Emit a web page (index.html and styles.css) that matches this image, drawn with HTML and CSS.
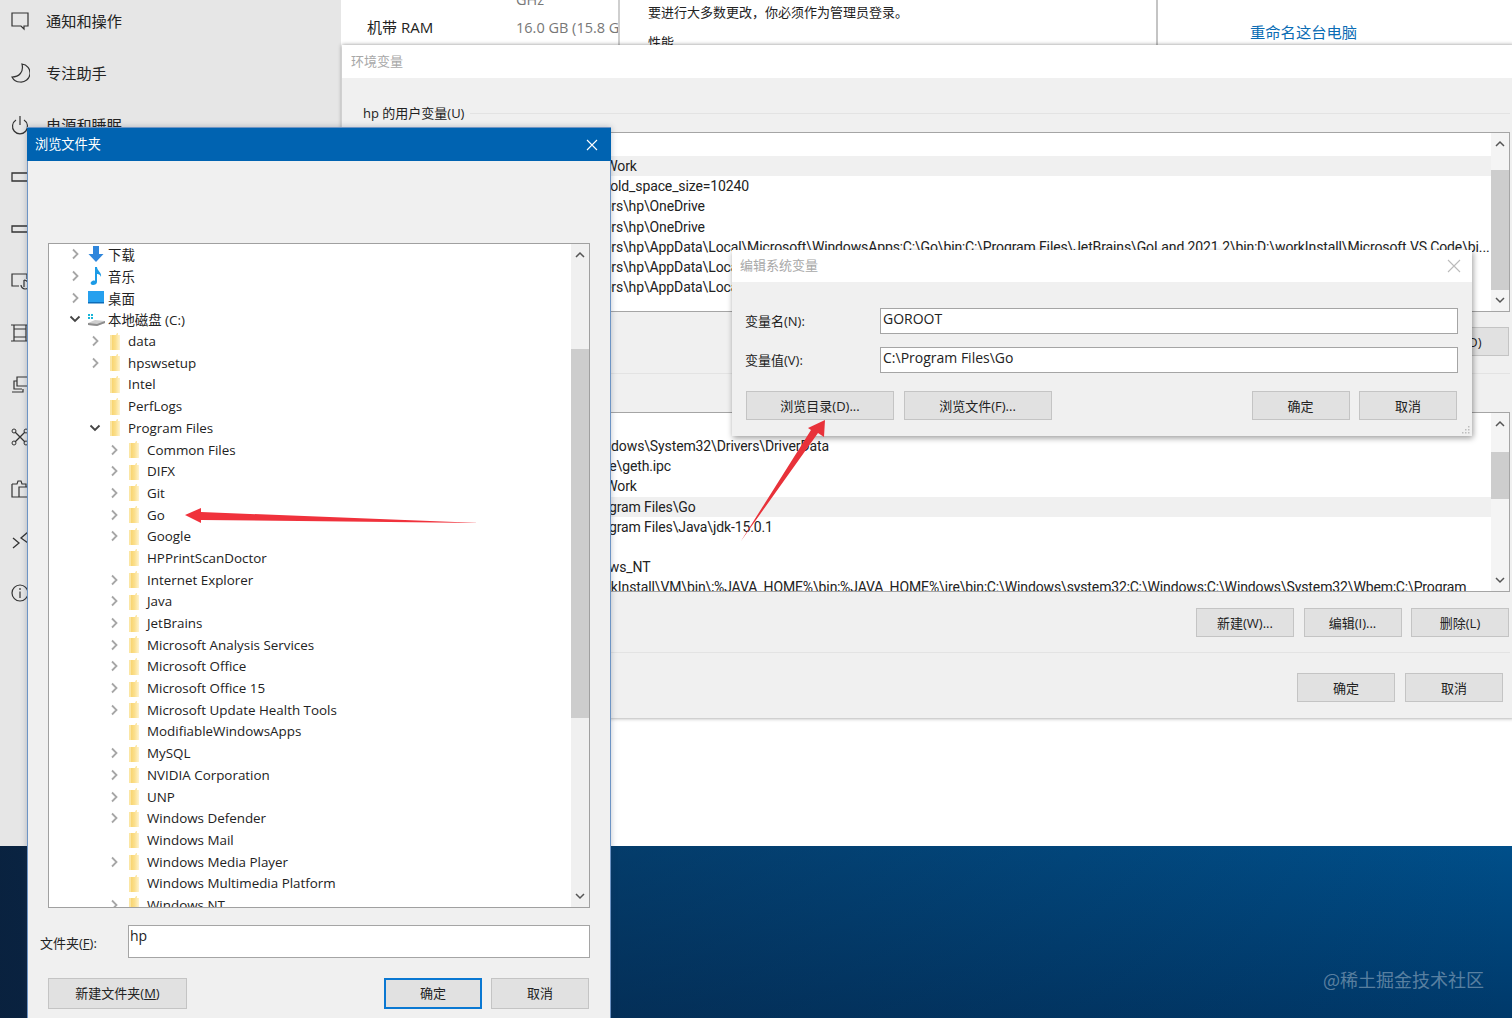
FILE: index.html
```html
<!DOCTYPE html>
<html lang="zh-CN">
<head>
<meta charset="UTF-8">
<title>浏览文件夹</title>
<link rel="stylesheet" href="styles.css">
</head>
<body>
<svg class="defs" width="0" height="0">
	<defs>
		<linearGradient id="folderFade" x1="0" x2="1" y1="0" y2="0">
			<stop offset="0" stop-color="#f7cf62"/>
			<stop offset="0.55" stop-color="#fbdf8c"/>
			<stop offset="1" stop-color="#fef3cf"/>
		</linearGradient>
	</defs>
	<symbol id="folder" viewBox="0 0 10 17">
		<path d="M0 2h6l1-2h1v2h2v15H0z" fill="url(#folderFade)"/>
		<path d="M0 2h2v15H0z" fill="#fbe6a4"/>
	</symbol>
	<symbol id="right" viewBox="0 0 12 12"><path d="M4 1.500L8.500 6 4 10.500" fill="none" stroke="#a6a6a6" stroke-width="1.800"/></symbol>
	<symbol id="down" viewBox="0 0 12 12"><path d="M1.500 3.500L6 8l4.500-4.500" fill="none" stroke="#444" stroke-width="1.800"/></symbol>
	<symbol id="sup" viewBox="0 0 12 8"><path d="M2 6l4-4 4 4" fill="none" stroke="#555" stroke-width="1.500"/></symbol>
	<symbol id="sdown" viewBox="0 0 12 8"><path d="M2 2l4 4 4-4" fill="none" stroke="#555" stroke-width="1.500"/></symbol>
</svg>

<!-- settings window behind everything -->
<div class="settings win">
	<nav class="side">
		<div class="nav-item">
			<svg class="nav-icon" viewBox="0 0 20 20"><path d="M2 2h16v13h-4v3l-3-3H2z" fill="none" stroke="#333" stroke-width="1.200"/></svg>
			<span>通知和操作</span>
		</div>
		<div class="nav-item">
			<svg class="nav-icon" viewBox="0 0 20 20"><path d="M12 1c2 8-3 13-10 13 2 4 6 5 8 5a9 9 0 0 0 2-18z" fill="none" stroke="#333" stroke-width="1.200"/></svg>
			<span>专注助手</span>
		</div>
		<div class="nav-item">
			<svg class="nav-icon" viewBox="0 0 20 20"><path d="M6 5a7.500 7.500 0 1 0 8 0M10 1v9" fill="none" stroke="#333" stroke-width="1.200"/></svg>
			<span>电源和睡眠</span>
		</div>
		<div class="nav-item">
			<svg class="nav-icon" viewBox="0 0 20 20"><path d="M2 6h16v8H2z" fill="none" stroke="#333" stroke-width="1.300"/></svg>
		</div>
		<div class="nav-item">
			<svg class="nav-icon" viewBox="0 0 20 20"><path d="M2 7h16v6H2z" fill="none" stroke="#333" stroke-width="1.300"/></svg>
		</div>
		<div class="nav-item">
			<svg class="nav-icon" viewBox="0 0 20 20"><path d="M9 15H2V3h15v5M14 9v7M14 9c3 0 5 3 5 6s-2 3-4 3-4-2-4-4" fill="none" stroke="#333" stroke-width="1.200"/></svg>
		</div>
		<div class="nav-item">
			<svg class="nav-icon" viewBox="0 0 20 20"><path d="M1 2h18M1 18h18M4 2v16M16 2v16M4 6h12M4 14h12" fill="none" stroke="#333" stroke-width="1.200"/></svg>
		</div>
		<div class="nav-item">
			<svg class="nav-icon" viewBox="0 0 20 20"><path d="M7 2h12v9H7zM7 6H4v8h8M2 17h11v-3" fill="none" stroke="#333" stroke-width="1.200"/></svg>
		</div>
		<div class="nav-item">
			<svg class="nav-icon" viewBox="0 0 20 20"><path d="M5 5l10 10M15 5L5 15" stroke="#333" stroke-width="1.300"/><circle cx="4" cy="4" r="2" fill="none" stroke="#333"/><circle cx="16" cy="4" r="2" fill="none" stroke="#333"/><circle cx="4" cy="16" r="2" fill="none" stroke="#333"/><circle cx="16" cy="16" r="2" fill="none" stroke="#333"/></svg>
		</div>
		<div class="nav-item">
			<svg class="nav-icon" viewBox="0 0 20 20"><path d="M2 5h5l1-3h3l1 3h4v3M2 5v13h7M9 8h10v10H9z" fill="none" stroke="#333" stroke-width="1.200"/></svg>
		</div>
		<div class="nav-item">
			<svg class="nav-icon" viewBox="0 0 20 20"><path d="M3 7l6 5-6 5M18 1l-7 6 7 5" fill="none" stroke="#333" stroke-width="1.300"/></svg>
		</div>
		<div class="nav-item">
			<svg class="nav-icon" viewBox="0 0 20 20"><circle cx="10" cy="10" r="8" fill="none" stroke="#333" stroke-width="1.200"/><path d="M10 8.500V15M10 5v2" stroke="#333" stroke-width="1.200"/></svg>
		</div>
	</nav>
	<div class="about">
		<div class="about-specs">
			<div class="spec spec-cut"><span class="spec-name"></span><span class="spec-val">GHz</span></div>
			<div class="spec"><span class="spec-name">机带 RAM</span><span class="spec-val">16.0 GB (15.8 GB 可用)</span></div>
		</div>
		<div class="admin-card">
			<p class="admin-msg">要进行大多数更改，你必须作为管理员登录。</p>
			<p class="admin-sub">性能</p>
		</div>
		<div class="about-links"><a class="rename">重命名这台电脑</a></div>
	</div>
</div>

<div class="desktop"><span class="watermark">@稀土掘金技术社区</span></div>

<!-- environment variables -->
<div class="env win">
	<div class="titlebar light"><span>环境变量</span></div>
	<div class="env-body">
		<div class="group-label"><span>hp 的用户变量(U)</span></div>
		<div class="list user-list">
			<div class="rows">
				<div class="row head"></div>
				<div class="row hl">D:\GoWork</div>
				<div class="row">--max_old_space_size=10240</div>
				<div class="row">C:\Users\hp\OneDrive</div>
				<div class="row">C:\Users\hp\OneDrive</div>
				<div class="row">C:\Users\hp\AppData\Local\Microsoft\WindowsApps;C:\Go\bin;C:\Program Files\JetBrains\GoLand 2021.2\bin;D:\workInstall\Microsoft VS Code\bi...</div>
				<div class="row">C:\Users\hp\AppData\Local\Temp</div>
				<div class="row">C:\Users\hp\AppData\Local\Temp</div>
			</div>
			<div class="scroll">
				<svg class="arrow"><use href="#sup"/></svg>
				<div class="track"><div class="thumb thumb-user"></div></div>
				<svg class="arrow"><use href="#sdown"/></svg>
			</div>
		</div>
		<div class="btn-row first-row"><button class="btn">删除(D)</button></div>
		<div class="rule"></div>
		<div class="list sys-list">
			<div class="rows">
				<div class="row head"></div>
				<div class="row">C:\Windows\System32\Drivers\DriverData</div>
				<div class="row">\\.\pipe\geth.ipc</div>
				<div class="row">D:\GoWork</div>
				<div class="row hl">C:\Program Files\Go</div>
				<div class="row">C:\Program Files\Java\jdk-15.0.1</div>
				<div class="row"></div>
				<div class="row">Windows_NT</div>
				<div class="row">D:\workInstall\VM\bin\;%JAVA_HOME%\bin;%JAVA_HOME%\jre\bin;C:\Windows\system32;C:\Windows;C:\Windows\System32\Wbem;C:\Program</div>
			</div>
			<div class="scroll">
				<svg class="arrow"><use href="#sup"/></svg>
				<div class="track"><div class="thumb thumb-sys"></div></div>
				<svg class="arrow"><use href="#sdown"/></svg>
			</div>
		</div>
		<div class="btn-row sys-btns">
			<button class="btn">新建(W)...</button>
			<button class="btn">编辑(I)...</button>
			<button class="btn">删除(L)</button>
		</div>
		<div class="rule rule-low"></div>
		<div class="btn-row env-ok">
			<button class="btn">确定</button>
			<button class="btn">取消</button>
		</div>
	</div>
</div>

<!-- edit system variable -->
<div class="edit win">
	<div class="titlebar light edit-title">
		<span>编辑系统变量</span>
		<svg class="close" viewBox="0 0 14 14"><path d="M1 1l12 12M13 1L1 13" stroke="#bbb" stroke-width="1.100"/></svg>
	</div>
	<div class="edit-body">
		<div class="field"><label>变量名(N):</label><div class="input">GOROOT</div></div>
		<div class="field"><label>变量值(V):</label><div class="input">C:\Program Files\Go</div></div>
		<div class="edit-btns">
			<button class="btn btn-wide">浏览目录(D)...</button>
			<button class="btn btn-wide">浏览文件(F)...</button>
			<span class="spacer"></span>
			<button class="btn">确定</button>
			<button class="btn">取消</button>
		</div>
	</div>
	<svg class="grip" viewBox="0 0 9 9"><path d="M7 1h1.500v1.500H7zM4 4h1.500v1.500H4zM7 4h1.500v1.500H7zM1 7h1.500v1.500H1zM4 7h1.500v1.500H4zM7 7h1.500v1.500H7z" fill="#bdbdbd"/></svg>
</div>

<!-- browse for folder -->
<div class="browse win">
	<div class="titlebar blue">
		<span>浏览文件夹</span>
		<svg class="close" viewBox="0 0 14 14"><path d="M2 2l10 10M12 2L2 12" stroke="#fff" stroke-width="1.100"/></svg>
	</div>
	<div class="browse-body">
		<div class="tree">
			<div class="tree-rows">
				<div class="node"><svg class="tw"><use href="#right"/></svg>
					<svg class="ico" viewBox="0 0 18 18"><path d="M6 1h6v8h4.500L9 17 1.500 9H6z" fill="#2f86dc"/></svg><span>下载</span></div>
				<div class="node"><svg class="tw"><use href="#right"/></svg>
					<svg class="ico" viewBox="0 0 18 18"><path d="M8 0h2c0 4 5 5 4 10-1-3-3-3-4-3v8c0 2-2 3-4 3s-3-2-2-3 3-2 4-1z" fill="#1c9be6"/></svg><span>音乐</span></div>
				<div class="node"><svg class="tw"><use href="#right"/></svg>
					<svg class="ico" viewBox="0 0 18 18"><path d="M1 2h16v12H1z" fill="#26a0ee"/><path d="M1 13h16v1.500H1z" fill="#0c6cb8"/></svg><span>桌面</span></div>
				<div class="node"><svg class="tw"><use href="#down"/></svg>
					<svg class="ico" viewBox="0 0 18 18"><path d="M1 4h2v2H1zM4 4h2v2H4zM1 7h2v2H1zM4 7h2v2H4z" fill="#17b5d8"/><path d="M1 13l7-3 10 1v2l-8 3-9-1z" fill="#cfcfcf"/><path d="M1 13l9 1 8-3v2l-8 3-9-1z" fill="#8d8d8d"/></svg><span>本地磁盘 (C:)</span></div>
				<div class="node lv1"><svg class="tw"><use href="#right"/></svg><svg class="ico-f"><use href="#folder"/></svg><span>data</span></div>
				<div class="node lv1"><svg class="tw"><use href="#right"/></svg><svg class="ico-f"><use href="#folder"/></svg><span>hpswsetup</span></div>
				<div class="node lv1"><span class="tw"></span><svg class="ico-f"><use href="#folder"/></svg><span>Intel</span></div>
				<div class="node lv1"><span class="tw"></span><svg class="ico-f"><use href="#folder"/></svg><span>PerfLogs</span></div>
				<div class="node lv1"><svg class="tw"><use href="#down"/></svg><svg class="ico-f"><use href="#folder"/></svg><span>Program Files</span></div>
				<div class="node lv2"><svg class="tw"><use href="#right"/></svg><svg class="ico-f"><use href="#folder"/></svg><span>Common Files</span></div>
				<div class="node lv2"><svg class="tw"><use href="#right"/></svg><svg class="ico-f"><use href="#folder"/></svg><span>DIFX</span></div>
				<div class="node lv2"><svg class="tw"><use href="#right"/></svg><svg class="ico-f"><use href="#folder"/></svg><span>Git</span></div>
				<div class="node lv2"><svg class="tw"><use href="#right"/></svg><svg class="ico-f"><use href="#folder"/></svg><span>Go</span></div>
				<div class="node lv2"><svg class="tw"><use href="#right"/></svg><svg class="ico-f"><use href="#folder"/></svg><span>Google</span></div>
				<div class="node lv2"><span class="tw"></span><svg class="ico-f"><use href="#folder"/></svg><span>HPPrintScanDoctor</span></div>
				<div class="node lv2"><svg class="tw"><use href="#right"/></svg><svg class="ico-f"><use href="#folder"/></svg><span>Internet Explorer</span></div>
				<div class="node lv2"><svg class="tw"><use href="#right"/></svg><svg class="ico-f"><use href="#folder"/></svg><span>Java</span></div>
				<div class="node lv2"><svg class="tw"><use href="#right"/></svg><svg class="ico-f"><use href="#folder"/></svg><span>JetBrains</span></div>
				<div class="node lv2"><svg class="tw"><use href="#right"/></svg><svg class="ico-f"><use href="#folder"/></svg><span>Microsoft Analysis Services</span></div>
				<div class="node lv2"><svg class="tw"><use href="#right"/></svg><svg class="ico-f"><use href="#folder"/></svg><span>Microsoft Office</span></div>
				<div class="node lv2"><svg class="tw"><use href="#right"/></svg><svg class="ico-f"><use href="#folder"/></svg><span>Microsoft Office 15</span></div>
				<div class="node lv2"><svg class="tw"><use href="#right"/></svg><svg class="ico-f"><use href="#folder"/></svg><span>Microsoft Update Health Tools</span></div>
				<div class="node lv2"><span class="tw"></span><svg class="ico-f"><use href="#folder"/></svg><span>ModifiableWindowsApps</span></div>
				<div class="node lv2"><svg class="tw"><use href="#right"/></svg><svg class="ico-f"><use href="#folder"/></svg><span>MySQL</span></div>
				<div class="node lv2"><svg class="tw"><use href="#right"/></svg><svg class="ico-f"><use href="#folder"/></svg><span>NVIDIA Corporation</span></div>
				<div class="node lv2"><svg class="tw"><use href="#right"/></svg><svg class="ico-f"><use href="#folder"/></svg><span>UNP</span></div>
				<div class="node lv2"><svg class="tw"><use href="#right"/></svg><svg class="ico-f"><use href="#folder"/></svg><span>Windows Defender</span></div>
				<div class="node lv2"><span class="tw"></span><svg class="ico-f"><use href="#folder"/></svg><span>Windows Mail</span></div>
				<div class="node lv2"><svg class="tw"><use href="#right"/></svg><svg class="ico-f"><use href="#folder"/></svg><span>Windows Media Player</span></div>
				<div class="node lv2"><span class="tw"></span><svg class="ico-f"><use href="#folder"/></svg><span>Windows Multimedia Platform</span></div>
				<div class="node lv2"><svg class="tw"><use href="#right"/></svg><svg class="ico-f"><use href="#folder"/></svg><span>Windows NT</span></div>
			</div>
			<div class="scroll tree-scroll">
				<svg class="arrow"><use href="#sup"/></svg>
				<div class="track"><div class="thumb thumb-tree"></div></div>
				<svg class="arrow"><use href="#sdown"/></svg>
			</div>
		</div>
		<div class="folder-field">
			<label>文件夹(<u>F</u>):</label>
			<div class="input folder-input">hp</div>
		</div>
		<div class="browse-btns">
			<button class="btn btn-new">新建文件夹(<u>M</u>)</button>
			<span class="spacer"></span>
			<button class="btn btn-default">确定</button>
			<button class="btn">取消</button>
		</div>
	</div>
</div>

<!-- red annotation arrows, drawn on top of the screenshot -->
<svg class="marks" viewBox="0 0 1512 1018">
	<path d="M185 515L201 508 201 512 480 523 201 520 201 523z" fill="#f0323c"/>
	<path d="M825 420L824 437 818 433 741 541 811 430 808 428z" fill="#e8323a"/>
</svg>
</body>
</html>
```
FILE: styles.css
```css
* {
	box-sizing: border-box;
}

html, body {
	margin: 0;
	height: 1018px;
	overflow: hidden;
}

body {
	position: relative;
	font-family: "Open Sans", "Noto Sans CJK SC", sans-serif;
	font-size: 14px;
	color: #222;
	background: #fff;
}

.defs {
	position: absolute;
}

/* Windows sit on a free desktop so they are placed by coordinate */
.win {
	position: absolute;
}

.settings {
	left: 0;
	top: 0;
	width: 1512px;
	height: 846px;
	display: flex;
	background: #fff;
}

.side {
	width: 341px;
	background: #e6e6e6;
}

.nav-item {
	height: 52px;
	display: flex;
	align-items: center;
	gap: 16px;
	padding-left: 10px;
	font-size: 15.200px;
}

.nav-item:first-child {
	margin-top: -5px;
}

.nav-item span {
	margin-bottom: 2px;
}

.nav-icon {
	width: 20px;
	height: 20px;
	flex: none;
}

.about {
	flex: 1;
	display: flex;
	height: 46px;
	overflow: hidden;
}

.about-specs {
	width: 277px;
	padding-left: 26px;
	overflow: hidden;
	white-space: nowrap;
}

.spec {
	display: flex;
	height: 24px;
	align-items: center;
	font-size: 15px;
}

.spec-cut {
	height: 14px;
	margin-top: -8px;
	margin-bottom: 8px;
}

.spec-name {
	width: 149px;
	flex: none;
}

.spec-val {
	color: #777;
	font-size: 14.500px;
}

.admin-card {
	width: 529px;
	padding-left: 28px;
	border-left: 2px solid #cfcfcf;
	background: #fff;
}

.admin-msg, .admin-sub {
	margin: 0;
	font-size: 13px;
}

.admin-msg {
	padding-top: 3px;
	line-height: 18px;
}

.admin-sub {
	margin-top: 12px;
	line-height: 18px;
}

.about-links {
	flex: 1;
	margin-left: 9px;
	border-left: 2px solid #c4c4c4;
	padding: 21px 0 0 92px;
}

.rename {
	color: #0a6cb4;
	font-size: 15.300px;
	line-height: 22px;
}

.desktop {
	position: absolute;
	left: 0;
	top: 846px;
	width: 1512px;
	height: 172px;
	background: linear-gradient(180deg, #004f8a 0%, #00396a 100%);
}

.desktop::before {
	content: "";
	position: absolute;
	inset: 0;
	background: linear-gradient(90deg, rgba(10, 32, 60, 0.95) 0%, rgba(10, 32, 60, 0.4) 41%, rgba(10, 32, 60, 0) 100%);
}

.watermark {
	position: absolute;
	right: 28px;
	top: 121px;
	font-size: 18px;
	line-height: 24px;
	color: rgba(255, 255, 255, 0.36);
	font-family: "Noto Sans CJK SC", sans-serif;
}

.titlebar {
	display: flex;
	align-items: center;
	justify-content: space-between;
}

.titlebar span {
	margin-bottom: 3px;
}

.titlebar.light {
	background: #fff;
	color: #a8a8a8;
	font-size: 13px;
}

.titlebar.blue {
	height: 33px;
	margin: 0 -1px;
	background: #0063b1;
	color: #fff;
	font-size: 13.200px;
	padding: 0 12px 0 8px;
}

.close {
	width: 14px;
	height: 14px;
}

/* environment variables window */
.env {
	left: 342px;
	top: 45px;
	width: 1172px;
	height: 673px;
	background: #f0f0f0;
	box-shadow: 0 0 4px rgba(0, 0, 0, 0.45);
}

.env .titlebar {
	height: 33px;
	padding-left: 9px;
}

.env-body {
	padding: 24px 4px 0 18px;
	display: flex;
	flex-direction: column;
}

.group-label {
	display: flex;
	align-items: center;
	gap: 6px;
	padding-left: 3px;
	font-size: 13px;
	line-height: 22px;
}

.group-label::after {
	content: "";
	flex: 1;
	height: 1px;
	background: #e3e3e3;
}

.list {
	display: flex;
	background: #fff;
	border: 1px solid #a5a5a5;
	height: 180px;
	overflow: hidden;
}

.user-list {
	margin-top: 8px;
}

.rows {
	flex: 1;
	min-width: 0;
}

/* value column starts under the dialog, only its right part shows */
.row {
	height: 20.200px;
	line-height: 20px;
	padding-left: 209px;
	font-family: Roboto, "Noto Sans CJK SC", sans-serif;
	font-size: 14px;
	letter-spacing: -0.12px;
	white-space: nowrap;
	overflow: hidden;
}

.row.head {
	height: 23px;
}

.row.hl {
	background: #f0f0f0;
}

.scroll {
	width: 18px;
	flex: none;
	display: flex;
	flex-direction: column;
	background: #f4f4f4;
}

.arrow {
	width: 18px;
	height: 22px;
	flex: none;
	padding: 7px 3px;
}

.track {
	flex: 1;
	position: relative;
}

.thumb {
	position: absolute;
	left: 0;
	right: 0;
	background: #cdcdcd;
}

.thumb-user {
	top: 15px;
	height: 120px;
}

.thumb-sys {
	top: 17px;
	height: 47px;
}

.thumb-tree {
	top: 83px;
	height: 369px;
}

.btn {
	font-family: inherit;
	font-size: 13px;
	color: #222;
	width: 98px;
	height: 29px;
	padding: 0;
	background: #e1e1e1;
	border: 1px solid #c4c4c4;
	border-radius: 0;
}

.btn-row {
	display: flex;
	justify-content: flex-end;
	padding-right: 1px;
}

.first-row {
	margin-top: 15px;
}

.rule {
	height: 1px;
	background: #e3e3e3;
	margin-top: 17px;
}

.sys-list {
	margin-top: 38px;
}

.sys-btns {
	gap: 9.500px;
	margin-top: 16px;
}

.rule-low {
	margin-top: 15px;
}

.env-ok {
	gap: 10px;
	margin-top: 20px;
	padding-right: 7px;
}

/* edit dialog */
.edit {
	left: 732px;
	top: 250px;
	width: 740px;
	height: 186px;
	background: #f0f0f0;
	box-shadow: 1px 2px 6px rgba(0, 0, 0, 0.4);
}

.edit-title {
	height: 32px;
	padding: 0 11px 0 8px;
}

.edit-body {
	padding: 26px 14px 0 13px;
}

.field {
	display: flex;
	align-items: center;
	margin-bottom: 13px;
}

.field label {
	width: 135px;
	font-size: 13px;
	flex: none;
	margin-bottom: 2px;
}

.input {
	flex: 1;
	height: 26px;
	background: #fff;
	border: 1px solid #a5a5a5;
	padding-left: 2px;
	line-height: 19px;
	font-size: 14px;
}

.edit-btns {
	display: flex;
	gap: 9.500px;
	margin: 18px 1px 0;
}

.btn-wide {
	width: 148px;
}

.spacer {
	flex: 1;
}

.grip {
	position: absolute;
	right: 2px;
	bottom: 2px;
	width: 9px;
	height: 9px;
}

/* browse for folder */
.browse {
	left: 27px;
	top: 127px;
	width: 584px;
	height: 891px;
	background: #f0f0f0;
	border: 1px solid #6d94c4;
	border-bottom: 0;
	box-shadow: 0 0 6px rgba(40, 60, 90, 0.3);
}

.browse-body {
	padding: 82px 20px 0 20px;
}

.tree {
	display: flex;
	height: 665px;
	background: #fff;
	border: 1px solid #a0a0a0;
	overflow: hidden;
}

.tree-rows {
	flex: 1;
	margin-top: -0.500px;
	padding-left: 20px;
	overflow: hidden;
}

.node {
	display: flex;
	align-items: center;
	height: 21.700px;
	font-size: 13.400px;
	white-space: nowrap;
}

.lv1 {
	padding-left: 20px;
}

.lv2 {
	padding-left: 39px;
}

.tw {
	width: 12px;
	height: 12px;
	flex: none;
	margin-right: 6px;
}

.ico {
	width: 18px;
	height: 18px;
	flex: none;
	margin-right: 3px;
}

.ico-f {
	width: 10px;
	height: 17px;
	flex: none;
	margin: 0 8px 0 3px;
}

.tree-scroll {
	background: #f0f0f0;
}

.folder-field {
	display: flex;
	align-items: center;
	margin-top: 17px;
	margin-left: -8px;
}

.folder-field label {
	width: 88px;
	font-size: 13px;
	padding-top: 2px;
	flex: none;
}

.folder-input {
	height: 33px;
	padding-left: 1px;
	line-height: 20px;
}

.browse-btns {
	display: flex;
	gap: 9px;
	margin-top: 20px;
	padding-right: 1px;
}

.browse-btns .btn {
	height: 31px;
	padding-bottom: 2px;
}

.btn-new {
	width: 139px;
}

.btn-default {
	border: 2px solid #0a78d2;
}

.marks {
	position: absolute;
	left: 0;
	top: 0;
	width: 1512px;
	height: 1018px;
	pointer-events: none;
}
```
